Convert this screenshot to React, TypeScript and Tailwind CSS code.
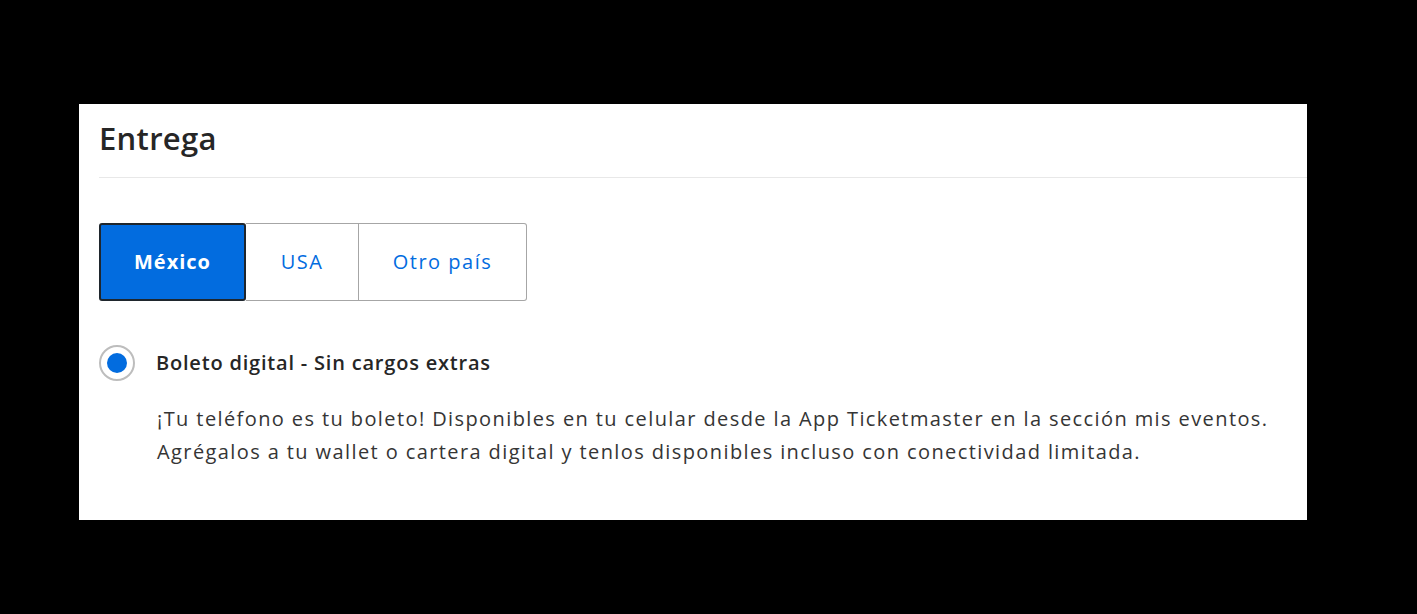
export default function App() {
  const tabs = [
    { label: 'México', active: true, w: 'w-[147px]' },
    { label: 'USA', active: false, w: 'w-[113px]' },
    { label: 'Otro país', active: false, w: 'w-[168px]' },
  ];

  return (
    <div className="min-h-[614px] bg-black pt-[104px] pl-[79px] font-['Open_Sans',sans-serif]">
      <div className="w-[1228px] h-[416px] bg-white pl-5">
        <div className="h-[74px] border-b border-[#e8e8e8] flex items-center">
          <h2 className="text-[31px] text-[#262626] font-semibold leading-none tracking-[0.3px] -mt-1">Entrega</h2>
        </div>

        <div className="pt-[45px] flex">
          {tabs.map((t, i) => (
            <button
              key={t.label}
              className={
                t.active
                  ? `${t.w} h-[78px] bg-[#026cdf] text-white font-bold text-[20px] tracking-[1px] border-2 border-[#1f262d] rounded-[3px]`
                  : `${t.w} h-[78px] bg-white text-[#026cdf] text-[20px] tracking-[1.5px] border border-l-0 border-[#a6a6a6] ${i === tabs.length - 1 ? 'rounded-r-[3px]' : ''}`
              }
            >
              {t.label}
            </button>
          ))}
        </div>

        <div className="mt-[44px] flex items-center">
          <span className="w-[36px] h-[36px] rounded-full border-2 border-[#bdbdbd] flex items-center justify-center">
            <span className="w-[20px] h-[20px] rounded-full bg-[#026cdf]" />
          </span>
          <span className="ml-[21px] text-[20px] font-semibold tracking-[0.8px] text-[#262626]">Boleto digital - Sin cargos extras</span>
        </div>

        <p className="mt-[21px] ml-[58px] text-[20px] leading-[33px] tracking-[1.4px] text-[#353535]">
          ¡Tu teléfono es tu boleto! Disponibles en tu celular desde la App Ticketmaster en la sección mis eventos.
          <br />
          Agrégalos a tu wallet o cartera digital y tenlos disponibles incluso con conectividad limitada.
        </p>
      </div>
    </div>
  );
}
